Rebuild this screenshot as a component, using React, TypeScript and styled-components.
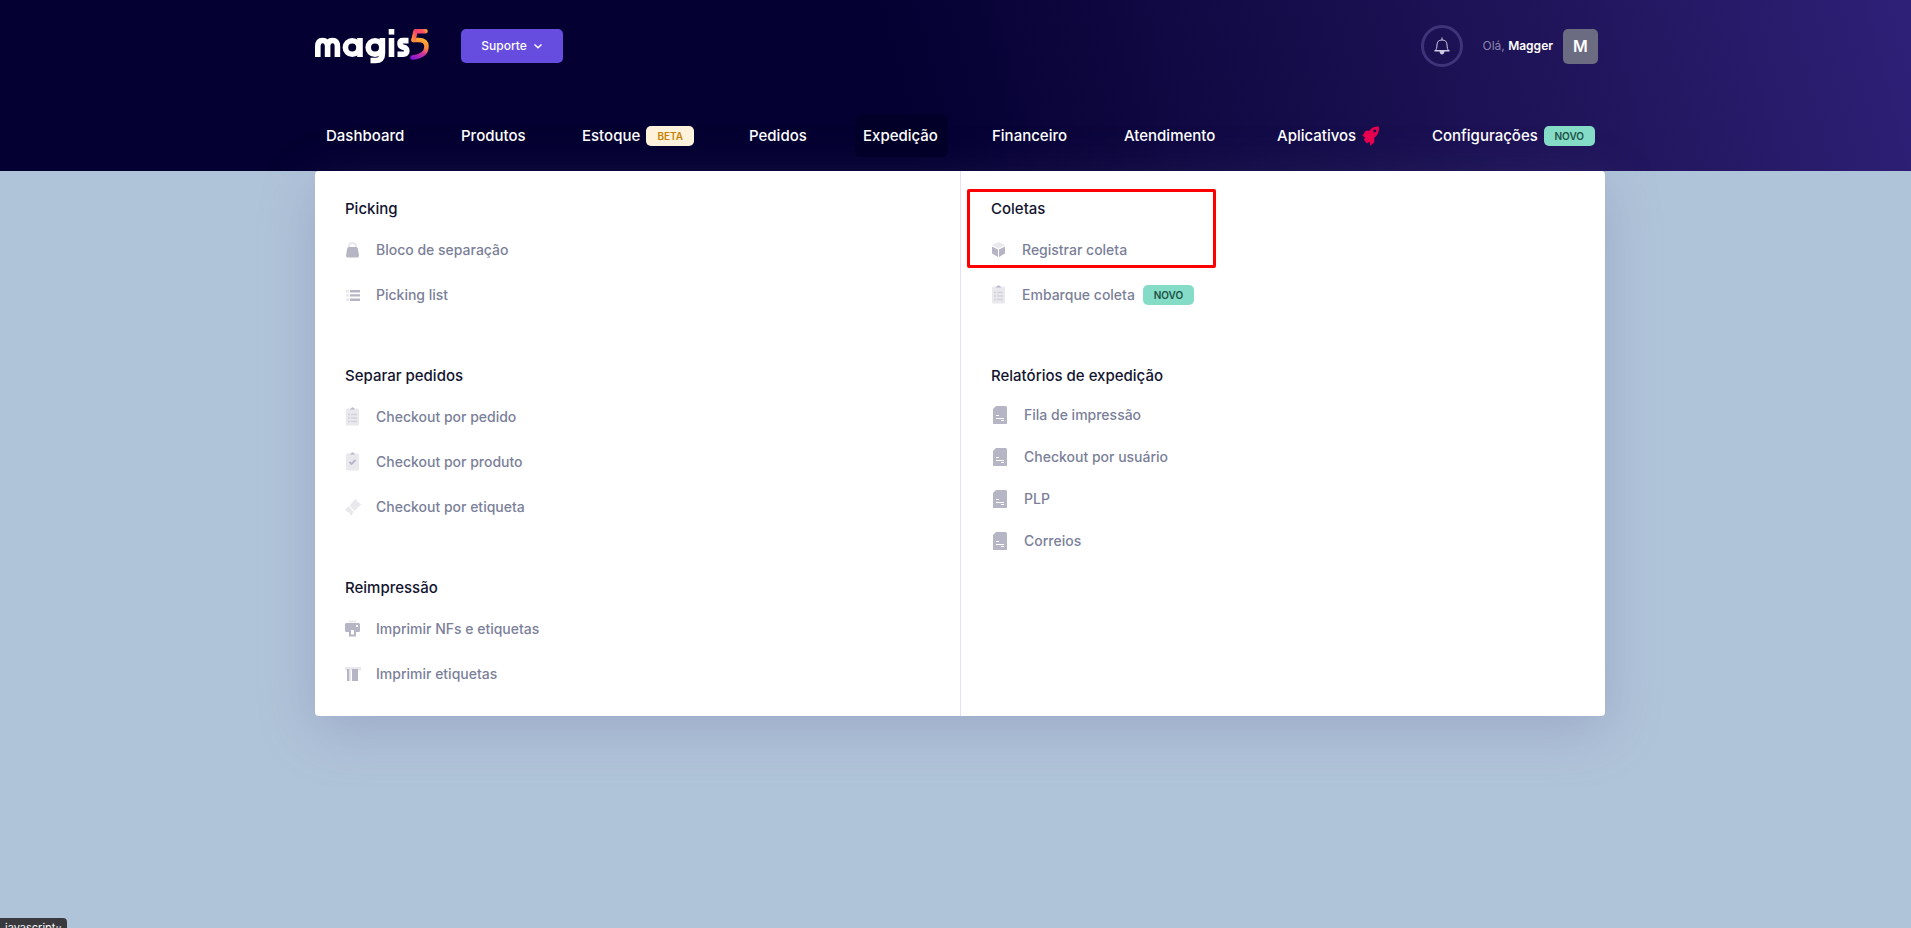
import React from 'react';
import styled, { createGlobalStyle } from 'styled-components';

const GlobalStyle = createGlobalStyle`
  *, *::before, *::after { box-sizing: border-box; }
  html { overflow: hidden; }
  body {
    margin: 0;
    min-height: 100vh;
    overflow: hidden;
    background: #b0c4d9;
    font-family: Inter, "Liberation Sans", sans-serif;
    font-size: 14px;
    line-height: 20px;
  }
`;

const Header = styled.header`
  height: 171px;
  padding-left: 9px;
  background: linear-gradient(75deg, #040031 0%, #040031 47%, #1f1459 80%, #2e2077 100%);
`;

const Content = styled.main`
  padding-left: 9px;
`;

const Container = styled.div`
  max-width: 1290px;
  margin: 0 auto;
`;

const TopBar = styled.div`
  display: flex;
  align-items: center;
  height: 92px;
`;

const LogoLink = styled.a`
  display: flex;
  margin-right: 30px;
`;

const SupportButton = styled.button`
  display: flex;
  align-items: center;
  justify-content: center;
  gap: 6px;
  width: 102px;
  height: 34px;
  border: 0;
  border-radius: 5px;
  background: #664de0;
  color: #fff;
  font: 500 12px/20px Inter, sans-serif;
`;

const UserArea = styled.div`
  display: flex;
  align-items: center;
  margin-left: auto;
  padding-right: 7px;
`;

const BellButton = styled.button`
  display: flex;
  align-items: center;
  justify-content: center;
  width: 42px;
  height: 42px;
  padding: 0;
  margin-right: 20px;
  border: 3px solid #3f3479;
  border-radius: 50%;
  background: transparent;
`;

const Greeting = styled.span`
  margin-right: 10px;
  color: #8b85ad;
  font-size: 12px;
  strong { color: #fff; font-weight: 600; }
`;

const Avatar = styled.span`
  display: flex;
  align-items: center;
  justify-content: center;
  width: 35px;
  height: 35px;
  border-radius: 5px;
  background: #6b6c82;
  color: #fff;
  font-size: 16px;
  font-weight: 600;
`;

const Nav = styled.nav`
  display: grid;
  grid-template-columns: 99px 85px 131px 78px 93px 96px 117px 119px auto;
  column-gap: 36px;
  justify-content: start;
  margin-top: 23px;
  padding-left: 3px;
`;

const NavLink = styled.a<{ $active?: boolean }>`
  display: flex;
  align-items: center;
  gap: 6px;
  height: 42px;
  padding: 0 8px;
  border-radius: 6px;
  background: ${({ $active }) => ($active ? '#020029' : 'transparent')};
  color: #fff;
  font-size: 15px;
  font-weight: 500;
  text-decoration: none;
  white-space: nowrap;
`;

const Badge = styled.span<{ $tone: 'beta' | 'novo' }>`
  display: inline-flex;
  align-items: center;
  justify-content: center;
  width: ${({ $tone }) => ($tone === 'beta' ? 48 : 51)}px;
  height: 20px;
  border-radius: 5px;
  background: ${({ $tone }) => ($tone === 'beta' ? '#fff2dc' : '#84dcc6')};
  color: ${({ $tone }) => ($tone === 'beta' ? '#c58100' : '#1d5146')};
  font-size: 10px;
  font-weight: 600;
`;

const Panel = styled.div`
  display: grid;
  grid-template-columns: 1fr 1fr;
  border-radius: 4px;
  background: #fff;
  box-shadow: 0 14px 56px rgba(100, 92, 150, 0.26);
`;

const Column = styled.div`
  display: flex;
  flex-direction: column;
  gap: 49px;
  padding: 28px 30px 20px;
  & + & { border-left: 1px solid #e4e1f2; }
`;

const Section = styled.section`
  position: relative;
`;

const Title = styled.h2`
  margin: 0 0 8px;
  color: #12142f;
  font-size: 15px;
  line-height: 20px;
  font-weight: 500;
`;

const List = styled.ul`
  margin: 0;
  padding: 0;
  list-style: none;
`;

const ItemLink = styled.a<{ $compact?: boolean }>`
  display: flex;
  align-items: center;
  height: ${({ $compact }) => ($compact ? 42 : 45)}px;
  color: #7b7f99;
  font-size: 14px;
  font-weight: 500;
  text-decoration: none;
`;

const IconSlot = styled.span<{ $compact?: boolean }>`
  display: flex;
  flex: none;
  width: ${({ $compact }) => ($compact ? 33 : 31)}px;
  padding-left: ${({ $compact }) => ($compact ? 1 : 0)}px;
`;

const ItemBadge = styled.span`
  display: inline-flex;
  margin-left: 8px;
`;

const Highlight = styled.div`
  position: absolute;
  top: -10px;
  left: -24px;
  width: 249px;
  height: 79px;
  border: 3px solid #ff0000;
  border-radius: 2px;
  pointer-events: none;
`;

const StatusTip = styled.div`
  position: fixed;
  left: 0;
  bottom: -10px;
  width: 67px;
  height: 20px;
  padding-left: 5px;
  border-radius: 0 4px 0 0;
  background: #38383d;
  color: #f5f5f7;
  font: 11px/20px Inter, sans-serif;
`;

const Logo = () => (
  <svg width="116" height="38" viewBox="0 0 116 38" fill="none" role="img" aria-label="magis5">
    <defs>
      <linearGradient id="five" x1="108" y1="10" x2="98" y2="33" gradientUnits="userSpaceOnUse">
        <stop offset="0" stopColor="#ffb52e" />
        <stop offset=".35" stopColor="#ff8a3f" />
        <stop offset=".6" stopColor="#d5359a" />
        <stop offset="1" stopColor="#7a14dd" />
      </linearGradient>
      <linearGradient id="fiveTop" x1="98" y1="12" x2="114" y2="3" gradientUnits="userSpaceOnUse">
        <stop offset="0" stopColor="#ff8a3c" />
        <stop offset=".35" stopColor="#f83f6c" />
        <stop offset=".7" stopColor="#fb5560" />
        <stop offset="1" stopColor="#ffd02e" />
      </linearGradient>
    </defs>
    <g stroke="#fff" strokeWidth="5.600">
      <path d="M2.800 30V19.500Q2.800 13.500 7.600 13.500T12.600 19.500V30M12.600 19.500Q12.600 13.500 17.500 13.500T22.400 19.500V30" />
      <circle cx="37.200" cy="20.500" r="6.800" />
      <path d="M45 11V30" />
      <circle cx="60" cy="20.500" r="6.800" />
      <path d="M67.400 11V26.500Q67.400 33.500 60.500 33.500H55.500" />
      <path d="M76.500 11V30" />
      <path d="M93.500 13.600H88Q85 13.600 85 16.500T88.300 20.300Q91.800 21 91.800 24T88 27.200H82.500" />
    </g>
    <rect x="73.700" y="2" width="5.600" height="5.600" fill="#fff" />
    <path d="M98.500 13H103.500Q111.500 13 111.500 19.500Q111.500 29 97.500 30.500" stroke="url(#five)" strokeWidth="4.500" strokeLinecap="round" />
    <path d="M98.500 13L100.500 4.300H110.500" stroke="url(#fiveTop)" strokeWidth="4.500" strokeLinecap="round" strokeLinejoin="round" />
  </svg>
);

const Chevron = () => (
  <svg width="10" height="10" viewBox="0 0 10 10" fill="none" aria-hidden="true">
    <path d="M1.500 3.500L5 6.800L8.500 3.500" stroke="#fff" strokeWidth="1.500" />
  </svg>
);

const Bell = () => (
  <svg width="16" height="18" viewBox="0 0 16 18" fill="none" aria-hidden="true">
    <path d="M8 .5V3M1.500 13.500Q3 12 3 8Q3 3 8 3T13 8Q13 12 14.500 13.500Z" stroke="#cdc9de" />
    <path d="M.5 13H15.500V14.500H.5ZM5.500 14.500H10.500Q10 17.500 8 17.500T5.500 14.500Z" fill="#cdc9de" />
  </svg>
);

const Rocket = () => (
  <svg width="18" height="20" viewBox="0 0 18 20" aria-hidden="true">
    <path
      fillRule="evenodd"
      fill="#e6004f"
      d="M17 .4Q10.500 0 7.600 4.600H3.600L.4 9.700L3 11.500L2 14L5 17.500L8 15.500V19.800L12.400 16.500V11.600Q18 8 17 .4ZM13 3.500A1.500 1.500 0 1 1 12.900 6.500A1.500 1.500 0 1 1 13 3.500Z"
    />
  </svg>
);

type IconName = 'bag' | 'list' | 'clipboard' | 'check' | 'ticket' | 'printer' | 'label' | 'box' | 'report';

const DARK = '#b6b5c5';
const LIGHT = '#e8e8ed';

const drawings: Record<IconName, React.ReactNode> = {
  bag: (
    <>
      <path d="M4 8V6Q4 3 7.500 3T11 6V8" fill="none" stroke={LIGHT} strokeWidth="2" />
      <path d="M4 7H11Q12.500 7 12.800 8.500L14 15.500Q14 17.500 12.500 17.500H2.500Q1 17.500 1 15.500L2.200 8.500Q2.500 7 4 7Z" fill={DARK} />
    </>
  ),
  list: (
    <>
      <path d="M5 5H15V7.500H5ZM5 9.200H15V11.500H5ZM5 13.500H15V16H5Z" fill={DARK} />
      <path d="M1 5H4V7.500H1ZM1 9.200H4V11.500H1ZM1 13.500H4V16H1Z" fill={LIGHT} />
    </>
  ),
  clipboard: (
    <>
      <rect x="1" y="1.500" width="13" height="17" rx="1.500" fill={LIGHT} />
      <path d="M5 2.500Q5 1.500 6.200 1.500Q7.500-.8 8.800 1.500Q10 1.500 10 2.500Z" fill={DARK} />
      <path d="M3 7.500H5M6 7.500H12M3 11H5M6 11H12M3 14.500H5M6 14.500H12" stroke="#d3d2dc" strokeWidth="1.300" />
    </>
  ),
  check: (
    <>
      <rect x="1" y="1.500" width="13" height="17" rx="1.500" fill={LIGHT} />
      <path d="M5 2.500Q5 1.500 6.200 1.500Q7.500-.8 8.800 1.500Q10 1.500 10 2.500Z" fill={DARK} />
      <path d="M4.500 10L6.500 12L10.500 8" fill="none" stroke={DARK} strokeWidth="1.800" />
    </>
  ),
  ticket: (
    <path
      d="M10.500 2L12.200 3.700Q12 5.500 14 5.500L16 7.500L9.500 14L4.500 8.500ZM3.600 9.300L8.600 14.800Q7.500 16 7.500 17L6.500 18.500L4.500 16.800Q4.800 14.800 2.500 15L0 12.800Z"
      fill={LIGHT}
    />
  ),
  printer: (
    <>
      <path d="M4 1.500H11V3.500H4Z" fill={LIGHT} />
      <path
        fillRule="evenodd"
        d="M1.500 4H13.500Q15 4 15 5.500V11.500Q15 13 13.500 13H11V17.500H4V13H1.500Q0 13 0 11.500V5.500Q0 4 1.500 4ZM6 11V15.500H9V11ZM11 6V8H13V6Z"
        fill={DARK}
      />
    </>
  ),
  label: (
    <>
      <path d="M0 3H16V6.500H0Z" fill={LIGHT} />
      <path d="M2 5H4.500V17H2ZM7 5H13V17H7Z" fill={DARK} />
      <path d="M4.500 5H6V17H4.500Z" fill={LIGHT} />
    </>
  ),
  box: (
    <>
      <path d="M7.500 2L14 5L7.500 8.500L1 5Z" fill={LIGHT} />
      <path d="M1 6.500L7 9.500V17L1 13.500ZM14 6.500L8 9.500V17L14 13.500Z" fill={DARK} />
    </>
  ),
  report: (
    <>
      <path d="M4 1H13.500Q15 1 15 2.500V19H1V4Z" fill={DARK} />
      <path d="M4 10.500H7M4 13.500H12M9 15.500H12" stroke="#fff" strokeWidth="1" />
    </>
  ),
};

const ItemIcon = ({ name }: { name: IconName }) => (
  <svg width="16" height="20" viewBox="0 0 16 20" aria-hidden="true">
    {drawings[name]}
  </svg>
);

interface Item {
  icon: IconName;
  label: string;
  isNew?: boolean;
}

interface Group {
  title: string;
  items: Item[];
  compact?: boolean;
  highlighted?: boolean;
}

const columns: Group[][] = [
  [
    {
      title: 'Picking',
      items: [
        { icon: 'bag', label: 'Bloco de separação' },
        { icon: 'list', label: 'Picking list' },
      ],
    },
    {
      title: 'Separar pedidos',
      items: [
        { icon: 'clipboard', label: 'Checkout por pedido' },
        { icon: 'check', label: 'Checkout por produto' },
        { icon: 'ticket', label: 'Checkout por etiqueta' },
      ],
    },
    {
      title: 'Reimpressão',
      items: [
        { icon: 'printer', label: 'Imprimir NFs e etiquetas' },
        { icon: 'label', label: 'Imprimir etiquetas' },
      ],
    },
  ],
  [
    {
      title: 'Coletas',
      highlighted: true,
      items: [
        { icon: 'box', label: 'Registrar coleta' },
        { icon: 'clipboard', label: 'Embarque coleta', isNew: true },
      ],
    },
    {
      title: 'Relatórios de expedição',
      compact: true,
      items: [
        { icon: 'report', label: 'Fila de impressão' },
        { icon: 'report', label: 'Checkout por usuário' },
        { icon: 'report', label: 'PLP' },
        { icon: 'report', label: 'Correios' },
      ],
    },
  ],
];

const App = () => (
  <>
    <GlobalStyle />
    <Header>
      <Container>
        <TopBar>
          <LogoLink href="#"><Logo /></LogoLink>
          <SupportButton type="button">Suporte <Chevron /></SupportButton>
          <UserArea>
            <BellButton type="button" aria-label="Notificações"><Bell /></BellButton>
            <Greeting>Olá, <strong>Magger</strong></Greeting>
            <Avatar>M</Avatar>
          </UserArea>
        </TopBar>
        <Nav>
          <NavLink href="#">Dashboard</NavLink>
          <NavLink href="#">Produtos</NavLink>
          <NavLink href="#">Estoque <Badge $tone="beta">BETA</Badge></NavLink>
          <NavLink href="#">Pedidos</NavLink>
          <NavLink href="#" $active>Expedição</NavLink>
          <NavLink href="#">Financeiro</NavLink>
          <NavLink href="#">Atendimento</NavLink>
          <NavLink href="#">Aplicativos <Rocket /></NavLink>
          <NavLink href="#">Configurações <Badge $tone="novo">NOVO</Badge></NavLink>
        </Nav>
      </Container>
    </Header>
    <Content>
      <Container>
        <Panel>
          {columns.map((groups, index) => (
            <Column key={index}>
              {groups.map((group) => (
                <Section key={group.title}>
                  <Title>{group.title}</Title>
                  <List>
                    {group.items.map((item) => (
                      <li key={item.label}>
                        <ItemLink href="#" $compact={group.compact}>
                          <IconSlot $compact={group.compact}><ItemIcon name={item.icon} /></IconSlot>
                          {item.label}
                          {item.isNew && <ItemBadge><Badge $tone="novo">NOVO</Badge></ItemBadge>}
                        </ItemLink>
                      </li>
                    ))}
                  </List>
                  {group.highlighted && <Highlight />}
                </Section>
              ))}
            </Column>
          ))}
        </Panel>
      </Container>
    </Content>
    <StatusTip>javascript:;</StatusTip>
  </>
);

export default App;
